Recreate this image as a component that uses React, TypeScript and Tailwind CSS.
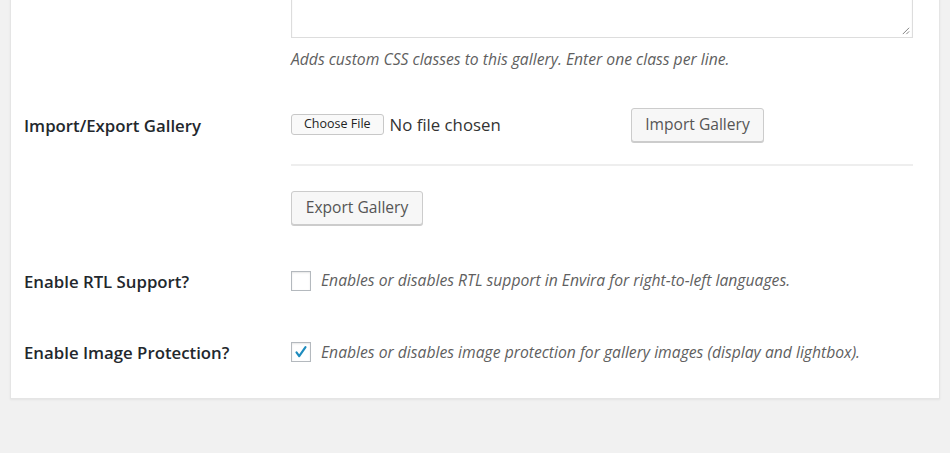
import React from 'react';

const font = { fontFamily: '"Open Sans", "Noto Sans", sans-serif' };

function WpButton({ children, className = '' }: { children: React.ReactNode; className?: string }) {
  return (
    <button
      className={`rounded-[3px] border border-[#cccccc] bg-[#f7f7f7] text-[#555555] shadow-[0_1px_0_#cccccc] ${className}`}
    >
      {children}
    </button>
  );
}

function CheckRow({ label, text, checked }: { label: string; text: string; checked?: boolean }) {
  return (
    <div className="flex items-center">
      <div className="w-[267px] shrink-0 text-[16.8px] font-semibold text-[#23282d]">{label}</div>
      <div className="flex items-center">
        <span className="flex h-[20px] w-[20px] items-center justify-center border border-[#b4b9be] bg-white shadow-[inset_0_1px_2px_rgba(0,0,0,0.1)]">
          {checked && (
            <svg viewBox="0 0 20 20" className="h-[18px] w-[18px]">
              <path d="M5 10.5l3 4.2L15 4.5" fill="none" stroke="#1e8cbe" strokeWidth="2.4" strokeLinecap="round" strokeLinejoin="round" />
            </svg>
          )}
        </span>
        <span className="ml-[10px] text-[15.7px] italic text-[#5f5f5f]">{text}</span>
      </div>
    </div>
  );
}

export default function App() {
  return (
    <div className="h-[453px] w-[950px] overflow-hidden bg-[#f1f1f1]" style={font}>
      <div className="mx-[10px] mt-[-63px] border border-[#e5e5e5] bg-white pb-[33px] pl-[13px] pr-[26px] shadow-[0_1px_2px_rgba(0,0,0,0.06)]">
        {/* CSS classes textarea */}
        <div className="flex">
          <div className="w-[267px] shrink-0" />
          <div className="flex-1">
            <div className="relative h-[100px] border border-[#dddddd] bg-white shadow-[inset_0_1px_2px_rgba(0,0,0,0.07)]">
              <svg viewBox="0 0 10 10" className="absolute bottom-[2px] right-[2px] h-[9px] w-[9px]">
                <path d="M9 2L2 9M9 6L6 9" stroke="#777" strokeWidth="1" />
              </svg>
            </div>
            <p className="mt-[10px] text-[15.7px] italic text-[#5f5f5f]">
              Adds custom CSS classes to this gallery. Enter one class per line.
            </p>
          </div>
        </div>

        {/* Import / Export */}
        <div className="mt-[36px] flex">
          <div className="w-[267px] shrink-0 pt-[5px] text-[16.8px] font-semibold text-[#23282d]">
            Import/Export Gallery
          </div>
          <div className="flex-1">
            <div className="flex items-center">
              <div className="flex w-[340px] items-center">
                <button className="h-[21px] rounded-[3px] border border-[#c8c8c8] bg-[#f9f9f9] px-[12px] text-[12.5px] text-[#222222]">
                  Choose File
                </button>
                <span className="ml-[6px] text-[16.8px] text-[#333333]">No file chosen</span>
              </div>
              <WpButton className="h-[34px] w-[133px] text-[15.6px]">Import Gallery</WpButton>
            </div>
            <div className="mt-[22px] h-[2px] bg-[#eeeeee]" />
            <WpButton className="mt-[25px] h-[34px] w-[132px] text-[15.6px]">Export Gallery</WpButton>
          </div>
        </div>

        <div className="mt-[44px]">
          <CheckRow label="Enable RTL Support?" text="Enables or disables RTL support in Envira for right-to-left languages." />
        </div>
        <div className="mt-[46px]">
          <CheckRow
            label="Enable Image Protection?"
            text="Enables or disables image protection for gallery images (display and lightbox)."
            checked
          />
        </div>
      </div>
    </div>
  );
}
